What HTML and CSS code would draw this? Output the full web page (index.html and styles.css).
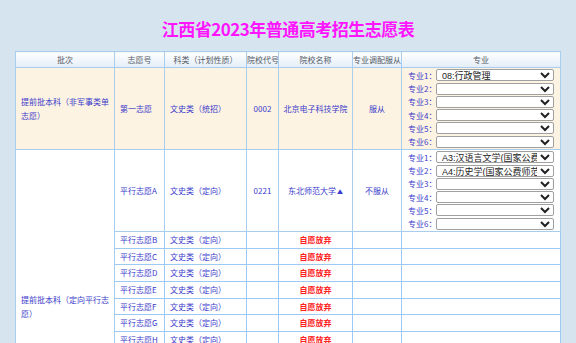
FILE: index.html
```html
<!DOCTYPE html>
<html lang="zh">
<head>
<meta charset="utf-8">
<title>江西省2023年普通高考招生志愿表</title>
<link rel="stylesheet" href="styles.css">
</head>
<body>
<h1 class="title">江西省2023年普通高考招生志愿表</h1>
<table class="zy">
  <colgroup>
    <col class="c-pc"><col class="c-zyh"><col class="c-kl"><col class="c-dm"><col class="c-mc"><col class="c-fc"><col class="c-zy">
  </colgroup>
  <thead>
    <tr>
      <th>批次</th><th>志愿号</th><th>科类（计划性质）</th><th>院校代号</th><th>院校名称</th><th>专业调配服从</th><th>专业</th>
    </tr>
  </thead>
  <tbody>
    <tr class="r-first">
      <td class="pc">提前批本科（非军事类单志愿）</td>
      <td>第一志愿</td>
      <td>文史类（统招）</td>
      <td class="ctr">0002</td>
      <td class="ctr">北京电子科技学院</td>
      <td class="ctr">服从</td>
      <td class="majors">
        <div class="mj"><span class="lb">专业1：</span><select><option>08:行政管理</option></select></div>
        <div class="mj"><span class="lb">专业2：</span><select><option></option></select></div>
        <div class="mj"><span class="lb">专业3：</span><select><option></option></select></div>
        <div class="mj"><span class="lb">专业4：</span><select><option></option></select></div>
        <div class="mj"><span class="lb">专业5：</span><select><option></option></select></div>
        <div class="mj"><span class="lb">专业6：</span><select><option></option></select></div>
      </td>
    </tr>
    <tr class="r-big">
      <td class="pc" rowspan="16">提前批本科（定向平行志愿）</td>
      <td>平行志愿A</td>
      <td>文史类（定向）</td>
      <td class="ctr">0221</td>
      <td class="ctr">东北师范大学<span class="tri">▲</span></td>
      <td class="ctr">不服从</td>
      <td class="majors">
        <div class="mj"><span class="lb">专业1：</span><select><option>A3:汉语言文学(国家公费师范生)</option></select></div>
        <div class="mj"><span class="lb">专业2：</span><select><option>A4:历史学(国家公费师范生)</option></select></div>
        <div class="mj"><span class="lb">专业3：</span><select><option></option></select></div>
        <div class="mj"><span class="lb">专业4：</span><select><option></option></select></div>
        <div class="mj"><span class="lb">专业5：</span><select><option></option></select></div>
        <div class="mj"><span class="lb">专业6：</span><select><option></option></select></div>
      </td>
    </tr>
    <tr class="r-s"><td>平行志愿B</td><td>文史类（定向）</td><td></td><td class="gv">自愿放弃</td><td></td><td></td></tr>
    <tr class="r-s"><td>平行志愿C</td><td>文史类（定向）</td><td></td><td class="gv">自愿放弃</td><td></td><td></td></tr>
    <tr class="r-s"><td>平行志愿D</td><td>文史类（定向）</td><td></td><td class="gv">自愿放弃</td><td></td><td></td></tr>
    <tr class="r-s"><td>平行志愿E</td><td>文史类（定向）</td><td></td><td class="gv">自愿放弃</td><td></td><td></td></tr>
    <tr class="r-s"><td>平行志愿F</td><td>文史类（定向）</td><td></td><td class="gv">自愿放弃</td><td></td><td></td></tr>
    <tr class="r-s"><td>平行志愿G</td><td>文史类（定向）</td><td></td><td class="gv">自愿放弃</td><td></td><td></td></tr>
    <tr class="r-s"><td>平行志愿H</td><td>文史类（定向）</td><td></td><td class="gv">自愿放弃</td><td></td><td></td></tr>
    <tr class="r-s"><td>平行志愿I</td><td>文史类（定向）</td><td></td><td class="gv">自愿放弃</td><td></td><td></td></tr>
    <tr class="r-s"><td>平行志愿J</td><td>文史类（定向）</td><td></td><td class="gv">自愿放弃</td><td></td><td></td></tr>
    <tr class="r-s"><td>平行志愿K</td><td>文史类（定向）</td><td></td><td class="gv">自愿放弃</td><td></td><td></td></tr>
    <tr class="r-s"><td>平行志愿L</td><td>文史类（定向）</td><td></td><td class="gv">自愿放弃</td><td></td><td></td></tr>
    <tr class="r-s"><td>平行志愿M</td><td>文史类（定向）</td><td></td><td class="gv">自愿放弃</td><td></td><td></td></tr>
    <tr class="r-s"><td>平行志愿N</td><td>文史类（定向）</td><td></td><td class="gv">自愿放弃</td><td></td><td></td></tr>
    <tr class="r-s"><td>平行志愿O</td><td>文史类（定向）</td><td></td><td class="gv">自愿放弃</td><td></td><td></td></tr>
  </tbody>
</table>
</body>
</html>
```
FILE: styles.css
```css
html, body {
  margin: 0;
  padding: 0;
  background: #d6e4f0;
}
body {
  font-family: "Noto Sans CJK SC", "Noto Sans", sans-serif;
}
.title {
  margin: 0;
  padding-top: 19px;
  height: 32px;
  line-height: 20px;
  text-align: center;
  font-size: 17px;
  font-weight: bold;
  color: #ff14ff;
  letter-spacing: -0.5px;
}
.zy {
  width: 545px;
  margin: 0 auto;
  border-collapse: collapse;
  table-layout: fixed;
  font-size: 8px;
  color: #3a3acb;
  background: #ffffff;
}
.c-pc { width: 99px; }
.c-zyh { width: 50px; }
.c-kl { width: 82px; }
.c-dm { width: 32px; }
.c-mc { width: 74px; }
.c-fc { width: 49px; }
.c-zy { width: 159px; }
.zy th, .zy td {
  border: 1px solid #a9cdec;
  padding: 0 5px;
  white-space: nowrap;
  overflow: hidden;
}
.zy th {
  height: 15px;
  padding: 0;
  font-weight: normal;
  color: #555b66;
  background: linear-gradient(#ffffff, #e3edf7);
  text-align: center;
}
.zy td.pc {
  white-space: normal;
  line-height: 14px;
  text-align: left;
  padding-right: 3px;
}
.zy td.ctr, .zy td.gv {
  text-align: center;
  padding: 0;
}
.zy td.gv {
  color: #ff2020;
  font-weight: bold;
}
.r-first td {
  background: #fdf3e2;
  height: 81px;
}
.r-big td {
  height: 81px;
}
.r-s td {
  height: 15.7px;
  padding-top: 0;
  padding-bottom: 0;
  line-height: 12px;
  border-color: #9ccaf4;
}
.zy td.majors {
  padding: 0 6px;
}
.mj {
  display: flex;
  align-items: center;
  height: 13.3px;
}
.lb {
  width: 28px;
  flex: none;
}
.mj select {
  width: 118px;
  height: 12px;
  font-size: 9px;
  font-family: "Liberation Sans", "Noto Sans CJK SC", sans-serif;
  color: #222;
  border: 1px solid #a0a0a0;
  border-radius: 2px;
  padding: 0 0 0 1px;
  margin: 0;
  background: #fff;
  line-height: 10px;
}
.tri {
  font-size: 6px;
  margin-left: 1px;
}
```
